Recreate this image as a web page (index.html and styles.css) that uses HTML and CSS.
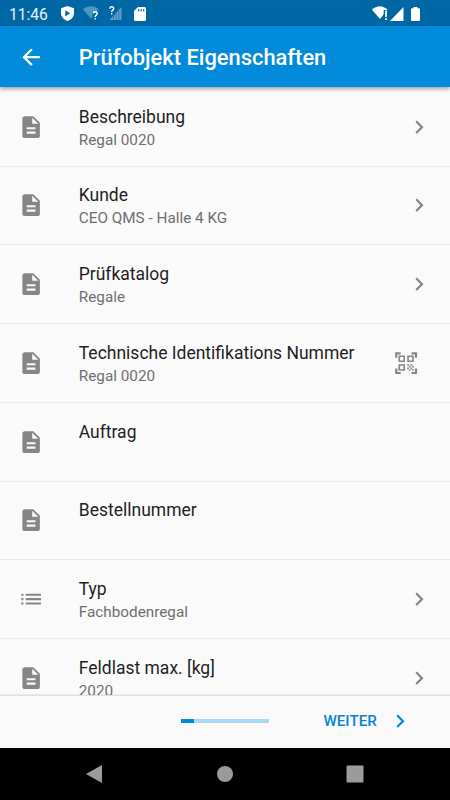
FILE: index.html
```html
<!DOCTYPE html>
<html lang="de">
<head>
<meta charset="utf-8">
<title>Prüfobjekt Eigenschaften</title>
<link rel="stylesheet" href="styles.css">
</head>
<body>
<svg class="defs" aria-hidden="true">
  <symbol id="doc" viewBox="0 0 24 24"><path d="M14 2H6c-1.100 0-2 .9-2 2v16c0 1.100.9 2 2 2h12c1.100 0 2-.9 2-2V8l-6-6zm2 16H8v-2h8v2zm0-4H8v-2h8v2zm-3-5V3.500L18.500 9H13z"/></symbol>
  <symbol id="chevron" viewBox="0 0 24 24"><path d="M10 6 8.590 7.410 13.170 12l-4.580 4.590L10 18l6-6z"/></symbol>
  <symbol id="list" viewBox="0 0 24 24"><path d="M3 7h2v2H3zM3 11h2v2H3zM3 15h2v2H3zM7 7h14v2H7zM7 11h14v2H7zM7 15h14v2H7z"/></symbol>
  <symbol id="qr" viewBox="0 0 24 24"><path d="M9.500 6.500v3h-3v-3h3M11 5H5v6h6V5zm-1.500 9.500v3h-3v-3h3M11 13H5v6h6v-6zm6.500-6.500v3h-3v-3h3M19 5h-6v6h6V5zm-6 8h1.500v1.500H13V13zm1.500 1.500H16V16h-1.500v-1.500zM16 13h1.500v1.500H16V13zm-3 3h1.500v1.500H13V16zm1.500 1.500H16V19h-1.500v-1.500zM16 16h1.500v1.500H16V16zm1.500-1.500H19V16h-1.500v-1.500zm0 3H19V19h-1.500v-1.500zM22 7h-2V4h-3V2h5v5zm0 15v-5h-2v3h-3v2h5zM2 22h5v-2H4v-3H2v5zM2 2v5h2V4h3V2H2z"/></symbol>
</svg>
<div class="screen">
  <div class="status">
    <span class="clock">11:46</span>
    <svg class="shield" viewBox="0 0 13 15"><path fill="#fff" d="M6.500 0 13 2.200V7c0 4-3 6.800-6.500 8C3 13.800 0 11 0 7V2.200z"/><path fill="#0067a5" d="M4.300 4.200v6.200L9.200 7.300z"/></svg>
    <svg class="wifi-off" viewBox="0 0 17 15"><path fill="#4f96c3" d="M0 3.300C4.800-.7 11-.7 15.800 3.300L13 6.500H9.500v4.300L8 12.500z"/><path class="query" d="M10.300 7.400c.2-2.200 3.900-2.200 3.900.1 0 1.700-2 1.600-2 3.600M12.200 12v1.500"/></svg>
    <svg class="cell-off" viewBox="0 0 13 15"><path fill="#5d9fc8" d="M12.500 1v13H.5z"/><path stroke="#1f77ae" stroke-width=".7" d="M4.500 8v6M7.200 6v8M10 3v11"/><path fill="#0067a5" d="M0 0h6v9H0z"/><path class="query" d="M.8 2.700C1-.1 4.700.2 4.700 2.500c0 1.700-2 1.700-2 3.400M2.700 7v1.500"/></svg>
    <svg class="sd" viewBox="0 0 12 14"><path fill="#fff" d="M4 0h6.500Q12 0 12 1.500v11Q12 14 10.500 14h-9Q0 14 0 12.500V4z"/><path stroke="#0067a5" stroke-width="1.100" d="M4.700 2v2.600M7.200 2v2.600M9.700 2v2.600"/></svg>
    <span class="spacer"></span>
    <svg class="wifi" viewBox="0 0 17 15"><path fill="#fff" d="M0 3.700C4.500-1 11-1 15.500 3.700L8 13z"/><path fill="#0067a5" d="M11.700 4h5v11h-4V10h-1z"/><path fill="#fff" d="M13.200 4.500h1.700V11h-1.700zM13.200 12.300h1.700V14h-1.700z"/></svg>
    <svg class="cell" viewBox="0 0 14 14"><path fill="#fff" d="M13.500 0v14H0z"/></svg>
    <svg class="battery" viewBox="0 0 9 14"><path fill="#fff" d="M2.500 0h4v1.300H8q1 0 1 1V13q0 1-1 1H1q-1 0-1-1V2.300q0-1 1-1h1.500z"/></svg>
  </div>
  <header class="appbar">
    <svg class="icon back" viewBox="0 0 24 24"><path d="M20 11H7.830l5.590-5.590L12 4l-8 8 8 8 1.410-1.410L7.830 13H20v-2z"/></svg>
    <h1>Prüfobjekt Eigenschaften</h1>
  </header>
  <main class="rows">
    <div class="row"><svg class="icon"><use href="#doc"/></svg><div class="text"><div class="title">Beschreibung</div><div class="sub">Regal 0020</div></div><svg class="icon"><use href="#chevron"/></svg></div>
    <div class="row"><svg class="icon"><use href="#doc"/></svg><div class="text"><div class="title">Kunde</div><div class="sub">CEO QMS - Halle 4 KG</div></div><svg class="icon"><use href="#chevron"/></svg></div>
    <div class="row"><svg class="icon"><use href="#doc"/></svg><div class="text"><div class="title">Prüfkatalog</div><div class="sub">Regale</div></div><svg class="icon"><use href="#chevron"/></svg></div>
    <div class="row"><svg class="icon"><use href="#doc"/></svg><div class="text"><div class="title">Technische Identifikations Nummer</div><div class="sub">Regal 0020</div></div><svg class="icon scan"><use href="#qr"/></svg></div>
    <div class="row"><svg class="icon"><use href="#doc"/></svg><div class="text"><div class="title">Auftrag</div><div class="sub"></div></div></div>
    <div class="row"><svg class="icon"><use href="#doc"/></svg><div class="text"><div class="title">Bestellnummer</div><div class="sub"></div></div></div>
    <div class="row"><svg class="icon"><use href="#list"/></svg><div class="text"><div class="title">Typ</div><div class="sub">Fachbodenregal</div></div><svg class="icon"><use href="#chevron"/></svg></div>
    <div class="row"><svg class="icon"><use href="#doc"/></svg><div class="text"><div class="title">Feldlast max. [kg]</div><div class="sub">2020</div></div><svg class="icon"><use href="#chevron"/></svg></div>
  </main>
  <footer class="stepper">
    <div class="progress"><div class="done"></div></div>
    <div class="next"><span>WEITER</span><svg class="icon"><use href="#chevron"/></svg></div>
  </footer>
  <nav class="navbar">
    <svg viewBox="0 0 18 18"><path d="M16 0v18L0 9z"/></svg>
    <svg viewBox="0 0 18 18"><circle cx="9" cy="9" r="8"/></svg>
    <svg viewBox="0 0 18 18"><rect x=".5" y=".5" width="17" height="17" rx="1"/></svg>
  </nav>
</div>
</body>
</html>
```

FILE: styles.css
```css
* { box-sizing: border-box; }
body { margin: 0; background: #fafafa; font-family: Roboto, sans-serif; }
.defs { position: absolute; width: 0; height: 0; }
.screen { width: 450px; height: 800px; display: flex; flex-direction: column; overflow: hidden; }
.icon { width: 26.25px; height: 26.25px; flex: none; fill: #868686; }

.status { height: 26px; flex: none; display: flex; align-items: center; padding: 1px 30px 0 9px; background: #0067a5; }
.status svg { flex: none; }
.clock { width: 52px; color: #e6f1f8; font-size: 15.6px; line-height: 24px; padding-top: 2px; }
.shield { width: 13px; height: 15px; }
.wifi-off { width: 17px; height: 15px; margin-left: 9px; }
.cell-off { width: 13px; height: 15px; margin-left: 9px; }
.sd { width: 12px; height: 14px; margin-left: 12px; }
.query { fill: none; stroke: #fff; stroke-width: 1.400; }
.spacer { flex: 1; }
.wifi { width: 17px; height: 15px; }
.cell { width: 14px; height: 14px; margin-left: 1px; }
.battery { width: 9px; height: 14px; margin-left: 7px; }

.appbar { height: 61.3px; flex: none; display: flex; align-items: center; padding-left: 17.5px; background: #028adb; box-shadow: 0 2px 4px rgba(0,0,0,.36); position: relative; z-index: 1; }
.appbar h1 { margin: 0 0 0 35px; padding-top: 2px; font-size: 21.9px; font-weight: 500; line-height: 28px; color: #fff; white-space: nowrap; }
.back { fill: #fff; }

.rows { flex: 1; min-height: 0; overflow: hidden; padding-top: .5px; }
.row { height: 78.75px; display: flex; align-items: center; padding: 0 17.5px; border-bottom: 1px solid #e9e9e9; }
.text { flex: 1; margin-left: 35px; padding-top: 1.8px; white-space: nowrap; }
.title { font-size: 17.5px; line-height: 24px; color: #1f1f1f; }
.sub { font-size: 15.3px; line-height: 22px; height: 22px; color: #707070; }
.scan { margin-right: 13.5px; }

.stepper { height: 53.5px; flex: none; display: flex; align-items: center; background: #fafafa; border-top: 1px solid #e0e0e0; box-shadow: 0 -1px 1px rgba(0,0,0,.06); position: relative; }
.progress { width: 88px; height: 4.4px; margin: 0 0 1px 181px; background: #aad9f4; }
.done { width: 13px; height: 100%; background: #028adb; }
.next { display: flex; align-items: center; margin: 0 0 1px 54.4px; color: #0982d8; font-size: 15.2px; font-weight: 500; }
.next .icon { margin-left: 10px; fill: #028adb; }

.navbar { height: 52px; flex: none; display: flex; align-items: center; justify-content: space-between; padding: 0 86px; background: #000; }
.navbar svg { width: 18px; height: 18px; fill: #9b9b9b; }
```
